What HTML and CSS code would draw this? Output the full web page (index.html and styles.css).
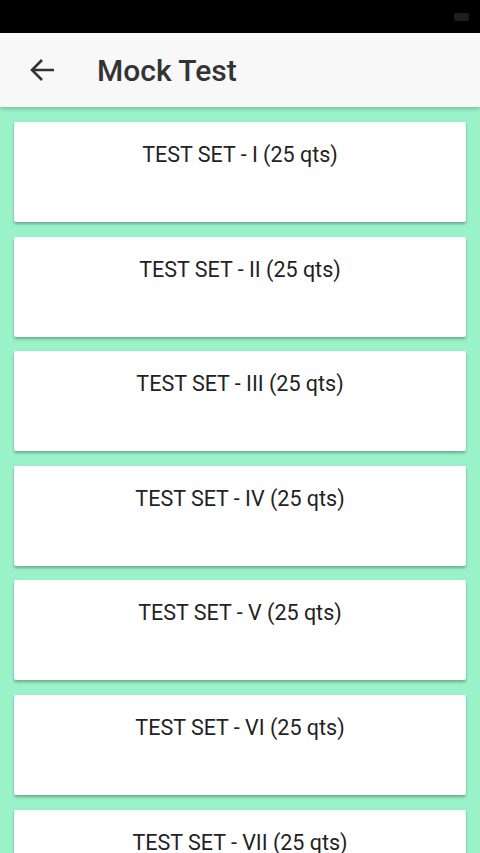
FILE: index.html
```html
<!DOCTYPE html>
<html lang="en">
<head>
  <meta charset="UTF-8">
  <title>Mock Test</title>
  <link rel="stylesheet" href="styles.css">
</head>
<body>

<div class="status-bar">
  <span class="battery"></span>
</div>

<header class="app-bar">
  <svg class="back" width="26" height="24" viewBox="0 0 26 24">
    <path d="M25 12H3M13 2L3 12l10 10" fill="none" stroke="#333" stroke-width="2.6"/>
  </svg>
  <h1>Mock Test</h1>
</header>

<main class="list">
  <div class="card">TEST SET - I (25 qts)</div>
  <div class="card">TEST SET - II (25 qts)</div>
  <div class="card">TEST SET - III (25 qts)</div>
  <div class="card">TEST SET - IV (25 qts)</div>
  <div class="card">TEST SET - V (25 qts)</div>
  <div class="card">TEST SET - VI (25 qts)</div>
  <div class="card">TEST SET - VII (25 qts)</div>
</main>

</body>
</html>
```

FILE: styles.css
```css
html, body {
  margin: 0;
  height: 853px;
  overflow: hidden;
}
body {
  font-family: Roboto, 'Noto Sans', sans-serif;
  background: #9af2c9;
  color: #222;
}
.status-bar {
  height: 33px;
  background: #000;
  display: flex;
  justify-content: flex-end;
  align-items: center;
  padding-right: 11px;
}
.battery {
  width: 15px;
  height: 8px;
  border-radius: 2px;
  background: #1e1e1e;
}
.app-bar {
  height: 74px;
  background: #f8f8f8;
  display: flex;
  align-items: center;
  padding-left: 29px;
  box-shadow: 0 2px 4px rgba(0,0,0,0.2);
  position: relative;
}
.back {
  display: block;
}
.app-bar h1 {
  margin: 0 0 0 42px;
  font-size: 30px;
  font-weight: 500;
  color: #333;
}
.list {
  padding: 15px 14px;
  display: flex;
  flex-direction: column;
  gap: 14.6px;
}
.card {
  background: #fff;
  height: 100px;
  box-sizing: border-box;
  padding-top: 20px;
  text-align: center;
  font-size: 21.5px;
  line-height: 26px;
  border-radius: 2px;
  box-shadow: 0 2px 3px rgba(0,0,0,0.3);
  flex-shrink: 0;
}
```
